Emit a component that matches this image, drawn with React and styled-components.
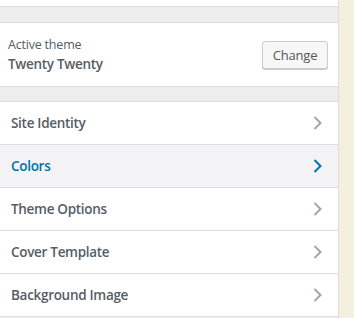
import React from 'react';
import styled, {createGlobalStyle} from 'styled-components';

const Global = createGlobalStyle`
    html, body {
        margin: 0;
        padding: 0;
    }
    body {
        font-family: "Open Sans", "Noto Sans", sans-serif;
        background: #f5efe0;
    }
`;

const Screen = styled.div`
    display: flex;
    width: 354px;
    height: 318px;
    overflow: hidden;
`;

const Sidebar = styled.div`
    width: 338px;
    flex-shrink: 0;
    background: #eee;
    border-right: 1px solid #ddd;
    display: flex;
    flex-direction: column;
`;

const Preview = styled.div`
    flex: 1;
    background: #f5efe0;
`;

const TopStrip = styled.div`
    height: 6px;
    background: #fff;
    border-bottom: 1px solid #ddd;
`;

const ThemeCard = styled.div`
    margin-top: 15px;
    height: 63px;
    background: #fff;
    border-top: 1px solid #ddd;
    border-bottom: 1px solid #ddd;
    display: flex;
    align-items: center;
    justify-content: space-between;
    padding: 0 10px 0 8px;
`;

const ThemeInfo = styled.div`
    display: flex;
    flex-direction: column;
    color: #555d66;
`;

const Label = styled.span`
    font-size: 12.5px;
    line-height: 19px;
    letter-spacing: -0.2px;
`;

const ThemeName = styled.span`
    font-size: 13.5px;
    font-weight: 600;
    line-height: 20px;
    letter-spacing: -0.3px;
`;

const Button = styled.button`
    width: 66px;
    height: 28px;
    padding: 0;
    font-family: inherit;
    font-size: 13px;
    letter-spacing: -0.2px;
    color: #555;
    background: #f7f7f7;
    border: 1px solid #ccc;
    border-radius: 3px;
    box-shadow: 0 1px 0 #ccc;
    margin-top: 1px;
`;

const SectionList = styled.ul`
    list-style: none;
    margin: 14px 0 0;
    padding: 0;
    border-top: 1px solid #ddd;
`;

const Row = styled.li`
    height: 42px;
    display: flex;
    align-items: center;
    justify-content: space-between;
    padding: 0 15px 0 11px;
    border-bottom: 1px solid #ddd;
    background: ${p => p.active ? '#f3f3f5' : '#fff'};
    color: ${p => p.active ? '#0073aa' : '#555d66'};
    font-size: 13.5px;
    font-weight: 600;
    letter-spacing: -0.3px;
`;

const Chevron = styled.svg`
    width: 10px;
    height: 14px;
    fill: none;
    stroke: ${p => p.active ? '#0073aa' : '#a0a5aa'};
    stroke-width: 2;
`;

const sections = ['Site Identity', 'Colors', 'Theme Options', 'Cover Template', 'Background Image'];

export default function App() {
    return (
        <Screen>
            <Global/>
            <Sidebar>
                <TopStrip/>
                <ThemeCard>
                    <ThemeInfo>
                        <Label>Active theme</Label>
                        <ThemeName>Twenty Twenty</ThemeName>
                    </ThemeInfo>
                    <Button>Change</Button>
                </ThemeCard>
                <SectionList>
                    {sections.map(name => (
                        <Row key={name} active={name === 'Colors'}>
                            {name}
                            <Chevron viewBox="0 0 10 14" active={name === 'Colors'}>
                                <polyline points="1.5,1 7.5,7 1.5,13"/>
                            </Chevron>
                        </Row>
                    ))}
                </SectionList>
            </Sidebar>
            <Preview/>
        </Screen>
    );
}
